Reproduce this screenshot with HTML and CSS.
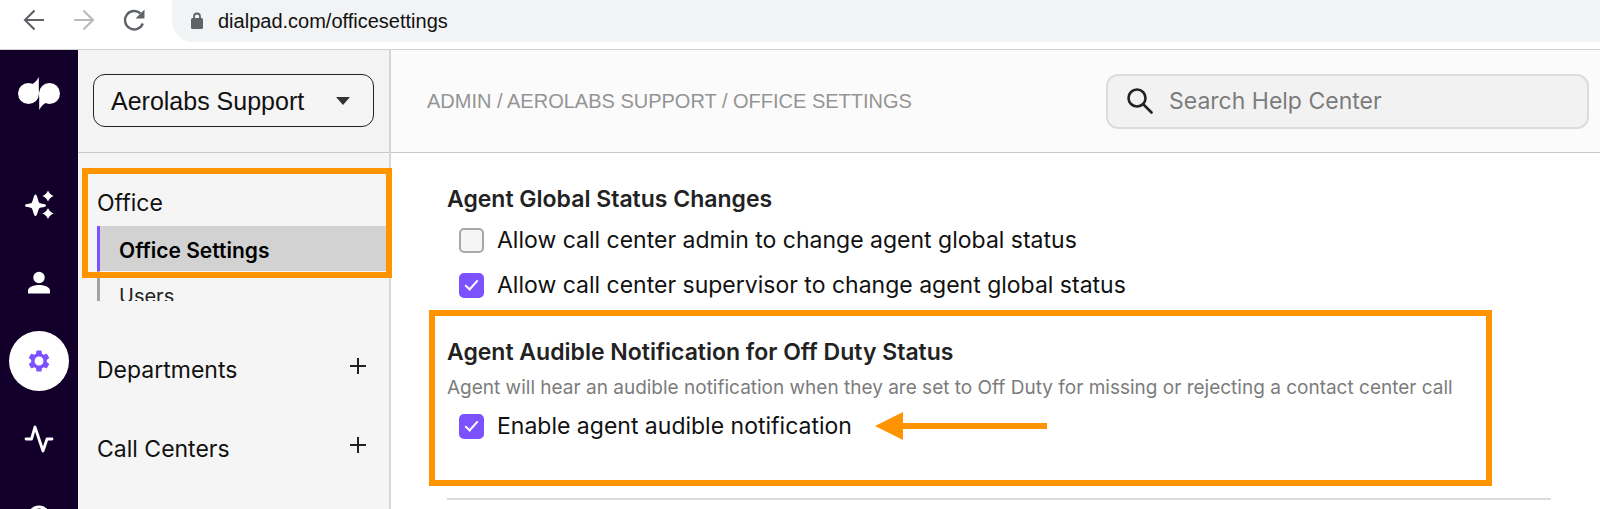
FILE: index.html
```html
<!DOCTYPE html>
<html lang="en">
<head>
    <meta charset="UTF-8">
    <meta name="viewport" content="width=device-width, initial-scale=1.0">
    <title>Office Settings</title>
    <link rel="stylesheet" href="styles.css">
</head>
<body>
    <!-- Browser bar -->
    <div class="browser-bar">
        <button class="nav-button" type="button" aria-label="Back">
            <svg width="24" height="24" viewBox="0 0 24 24" fill="none" stroke="#5f6368" stroke-width="2.200"><path d="M22 12H3M12.500 2.500L3 12l9.500 9.500"/></svg>
        </button>
        <button class="nav-button" type="button" aria-label="Forward">
            <svg width="24" height="24" viewBox="0 0 24 24" fill="none" stroke="#bababa" stroke-width="2.200"><path d="M2 12h19M11.500 2.500L21 12l-9.500 9.500"/></svg>
        </button>
        <button class="nav-button" type="button" aria-label="Reload">
            <svg width="24" height="24" viewBox="0 0 24 24"><path d="M20.800 15.500A9.200 9.200 0 1 1 18.500 5.500" fill="none" stroke="#5f6368" stroke-width="2.400"/><path d="M22.500 1.500v9h-9z" fill="#5f6368"/></svg>
        </button>
        <div class="address">
            <svg width="14" height="18" viewBox="0 0 14 18"><rect x="1" y="6" width="12" height="11" rx="1.500" fill="#5f6368"/><path d="M4 7V4.500a3 3 0 0 1 6 0V7" fill="none" stroke="#5f6368" stroke-width="1.800"/></svg>
            <input class="address-input" type="text" aria-label="Address" value="dialpad.com/officesettings">
        </div>
    </div>

    <div class="app">
        <!-- Icon rail -->
        <nav class="rail">
            <a class="rail-logo" href="#" aria-label="Home">
                <svg width="44" height="34" viewBox="0 0 44 34" fill="#fff"><circle cx="11.500" cy="16.500" r="10.500"/><circle cx="32.500" cy="16.500" r="10.500"/><path d="M21.800 0v17l-6-10.300C18.500 5.500 20 3 21.800 0zM22.200 33V16l6 10.300C25.500 27.500 24 30 22.200 33z"/></svg>
            </a>
            <a class="rail-item" href="#" aria-label="AI">
                <svg width="30" height="30" viewBox="0 0 30 30" fill="#fff"><path d="M11.500 4.500C13.500 4.500 14 12 15.500 13S22 13.500 22 15.500 17 17 15.500 18 13.500 26 11.500 26 9 19 7.500 18 1 17.500 1 15.500 6 14 7.500 13 9.500 4.500 11.500 4.500zM24 0.500C25.500 3.500 26.500 4.500 29.500 6 26.500 7.500 25.500 8.500 24 11.500 22.500 8.500 21.500 7.500 18.500 6 21.500 4.500 22.500 3.500 24 0.500zM24 18C25.500 21 26.500 22 29.500 23.500 26.500 25 25.500 26 24 29 22.500 26 21.500 25 18.500 23.500 21.500 22 22.500 21 24 18z"/></svg>
            </a>
            <a class="rail-item" href="#" aria-label="Contacts">
                <svg width="24" height="24" viewBox="0 0 24 24" fill="#fff"><circle cx="12" cy="6.500" r="5.700"/><path d="M1 22.500v-3c0-4 7-5.500 11-5.500s11 1.500 11 5.500v3z"/></svg>
            </a>
            <a class="rail-item rail-item-active" href="#" aria-label="Settings">
                <svg width="26" height="26" viewBox="0 0 24 24" fill="#7c52ff"><path d="M19.140 12.940c.04-.3.060-.61.060-.94s-.02-.64-.07-.94l2.030-1.580a.49.49 0 0 0 .12-.61l-1.920-3.320a.49.49 0 0 0-.59-.22l-2.390.96a7 7 0 0 0-1.620-.94l-.36-2.540a.48.48 0 0 0-.48-.41h-3.840a.48.48 0 0 0-.47.41l-.36 2.540a7.300 7.300 0 0 0-1.620.94l-2.390-.96a.48.48 0 0 0-.59.22L2.740 8.870a.48.48 0 0 0 .12.610l2.030 1.580c-.05.3-.09.63-.09.94s.02.64.07.94l-2.030 1.580a.49.49 0 0 0-.12.610l1.920 3.320c.12.22.37.29.59.22l2.390-.96c.5.38 1.030.7 1.620.94l.36 2.540c.05.24.24.41.48.41h3.840c.24 0 .44-.17.470-.41l.36-2.540a7 7 0 0 0 1.620-.94l2.390.96c.22.080.47 0 .59-.22l1.920-3.320a.47.47 0 0 0-.12-.61zM12 16.100a4.100 4.100 0 1 1 0-8.200 4.100 4.100 0 0 1 0 8.200z"/></svg>
            </a>
            <a class="rail-item" href="#" aria-label="Analytics">
                <svg width="30" height="30" viewBox="0 0 30 30" fill="none" stroke="#fff" stroke-width="2.800" stroke-linejoin="round" stroke-linecap="round"><path d="M2 15h5.500L11 3l8 24 4-12h5"/></svg>
            </a>
            <a class="rail-item" href="#" aria-label="Help">
                <svg width="24" height="24" viewBox="0 0 24 24" fill="none" stroke="#fff" stroke-width="3"><circle cx="12" cy="12" r="10"/></svg>
            </a>
        </nav>

        <!-- Sidebar -->
        <aside class="sidebar">
            <div class="sidebar-top">
                <div class="office-picker">
                    <select class="office-select" aria-label="Office">
                        <option>Aerolabs Support</option>
                    </select>
                    <svg class="office-caret" width="14" height="8" viewBox="0 0 14 8"><path d="M0 0h14L7 8z" fill="#333"/></svg>
                </div>
            </div>
            <div class="group group-current">
                <h2 class="group-title">Office</h2>
                <ul class="submenu">
                    <li><a class="submenu-link submenu-link-active" href="#">Office Settings</a></li>
                    <li><a class="submenu-link" href="#">Users</a></li>
                </ul>
            </div>
            <div class="group group-row">
                <h2 class="group-title">Departments</h2>
                <button class="add-button" type="button" aria-label="Add department">
                    <svg width="18" height="18" viewBox="0 0 18 18" stroke="#222" stroke-width="2"><path d="M9 1v16M1 9h16"/></svg>
                </button>
            </div>
            <div class="group group-row">
                <h2 class="group-title">Call Centers</h2>
                <button class="add-button" type="button" aria-label="Add call center">
                    <svg width="18" height="18" viewBox="0 0 18 18" stroke="#222" stroke-width="2"><path d="M9 1v16M1 9h16"/></svg>
                </button>
            </div>
        </aside>

        <!-- Content -->
        <main class="main">
            <header class="topbar">
                <div class="breadcrumb">ADMIN / AEROLABS SUPPORT / OFFICE SETTINGS</div>
                <div class="search">
                    <svg width="26" height="26" viewBox="0 0 26 26" fill="none" stroke="#222" stroke-width="2.600" stroke-linecap="round"><circle cx="10" cy="10" r="8.500"/><path d="M16.500 16.500l8 8"/></svg>
                    <input class="search-input" type="text" aria-label="Search Help Center" placeholder="Search Help Center">
                </div>
            </header>

            <form class="settings" action="#">
                <section class="setting">
                    <h3 class="setting-title">Agent Global Status Changes</h3>
                    <div class="check-list">
                        <div class="check-row">
                            <input class="check" type="checkbox" id="adminStatus">
                            <label for="adminStatus">Allow call center admin to change agent global status</label>
                        </div>
                        <div class="check-row">
                            <input class="check" type="checkbox" id="supervisorStatus" checked>
                            <label for="supervisorStatus">Allow call center supervisor to change agent global status</label>
                        </div>
                    </div>
                </section>
                <section class="setting setting-marked">
                    <h3 class="setting-title">Agent Audible Notification for Off Duty Status</h3>
                    <p class="setting-note">Agent will hear an audible notification when they are set to Off Duty for missing or rejecting a contact center call</p>
                    <div class="check-row">
                        <input class="check" type="checkbox" id="audible" checked>
                        <label for="audible">Enable agent audible notification</label>
                        <svg class="arrow" width="172" height="28" viewBox="0 0 172 28" fill="#ff9400"><path d="M0 14L28 0v11h144v6H28v11z"/></svg>
                    </div>
                </section>
                <hr class="divider">
            </form>
        </main>
    </div>
</body>
</html>
```
FILE: styles.css
```css
* {
    box-sizing: border-box;
}
body {
    margin: 0;
    height: 100vh;
    overflow: hidden;
    display: flex;
    flex-direction: column;
    font-family: Inter, "Liberation Sans", sans-serif;
    font-size: 23px;
    line-height: 28px;
    color: #111;
    background-color: #fff;
}
h2, h3, p, ul {
    margin: 0;
    padding: 0;
}
button {
    display: flex;
    padding: 0;
    border: none;
    background: none;
    cursor: pointer;
}
input, select {
    font: inherit;
    color: inherit;
}

/* browser bar */
.browser-bar {
    display: flex;
    gap: 26px;
    padding-left: 22px;
    height: 50px;
    flex-shrink: 0;
    border-bottom: 1px solid #d0d0d0;
}
.nav-button {
    padding-top: 8px;
}
.address {
    flex: 1;
    display: flex;
    align-items: center;
    gap: 14px;
    height: 42px;
    padding-left: 18px;
    border-radius: 0 0 0 21px;
    background-color: #f1f3f4;
}
.address-input {
    flex: 1;
    padding: 0;
    border: none;
    background: none;
    font-family: "Liberation Sans", Arial, sans-serif;
    font-size: 20px;
}

.app {
    flex: 1;
    min-height: 0;
    display: flex;
}

/* icon rail */
.rail {
    width: 78px;
    flex-shrink: 0;
    display: flex;
    flex-direction: column;
    align-items: center;
    gap: 18px;
    padding-top: 27px;
    overflow: hidden;
    background-color: #12002b;
}
.rail-logo {
    display: flex;
    margin-bottom: 46px;
}
.rail-item {
    width: 60px;
    height: 60px;
    flex-shrink: 0;
    display: flex;
    align-items: center;
    justify-content: center;
    border-radius: 50%;
}
.rail-item-active {
    background-color: #fff;
}

/* sidebar */
.sidebar {
    width: 313px;
    flex-shrink: 0;
    border-right: 2px solid #d6d6d6;
    background-color: #f5f5f5;
}
.sidebar-top {
    height: 103px;
    padding: 24px 15px;
    border-bottom: 1px solid #c8c8c8;
    background-color: #f3f3f3;
}
.office-picker {
    position: relative;
}
.office-select {
    width: 100%;
    height: 53px;
    padding: 0 17px;
    appearance: none;
    border: 1px solid #222;
    border-radius: 12px;
    background-color: #f5f5f5;
    font-family: "Liberation Sans", Arial, sans-serif;
    font-size: 25px;
}
.office-caret {
    position: absolute;
    right: 24px;
    top: 23px;
}
.group {
    padding-left: 19px;
}
.group-title {
    font-size: 23px;
    font-weight: 400;
}
.group-current {
    position: relative;
    padding-top: 36px;
    margin-bottom: 55px;
}
.group-current::after {
    content: "";
    position: absolute;
    top: 15px;
    left: 4px;
    right: -3px;
    height: 98px;
    border: 6px solid #ff9400;
}
.submenu {
    height: 75px;
    margin-top: 9px;
    overflow: hidden;
    list-style: none;
}
.submenu-link {
    display: block;
    padding: 11px 19px 6px;
    border-left: 3px solid #a3a3a3;
    font-size: 20px;
    color: #222;
    text-decoration: none;
}
.submenu-link-active {
    border-color: #7c52ff;
    background-color: #d2d2d2;
    font-size: 21px;
    font-weight: 600;
    color: #000;
}
.group-row {
    display: flex;
    justify-content: space-between;
    padding-right: 22px;
    margin-bottom: 51px;
}
.add-button {
    align-items: center;
    height: 20px;
}

/* content */
.main {
    flex: 1;
    min-width: 0;
}
.topbar {
    display: flex;
    align-items: center;
    justify-content: space-between;
    height: 103px;
    padding: 0 11px 0 36px;
    border-bottom: 1px solid #c8c8c8;
    background-color: #fbfbfb;
}
.breadcrumb {
    font-family: "Liberation Sans", Arial, sans-serif;
    font-size: 20px;
    color: #949494;
}
.search {
    display: flex;
    align-items: center;
    gap: 16px;
    width: 42%;
    max-width: 483px;
    height: 55px;
    padding: 0 19px;
    border: 2px solid #dcdcdc;
    border-radius: 12px;
    background-color: #f2f2f2;
}
.search-input {
    flex: 1;
    min-width: 0;
    padding: 0;
    border: none;
    background: none;
}
.search-input::placeholder {
    color: #7c7c7c;
}
.settings {
    padding: 32px 49px 0 38px;
}
.setting {
    padding-left: 18px;
}
.setting-title {
    font-size: 23px;
    font-weight: 600;
    color: #222;
}
.check-list {
    display: grid;
    gap: 17px;
    margin-top: 13px;
}
.check-row {
    display: flex;
    align-items: center;
    gap: 13px;
    padding: 0 12px;
}
.check {
    width: 25px;
    height: 25px;
    margin: 0;
    flex-shrink: 0;
    display: grid;
    place-items: center;
    appearance: none;
    border: 2px solid #a8a8a8;
    border-radius: 5px;
    background-color: #f5f5f5;
}
.check:checked {
    border-color: #7c52ff;
    background-color: #7c52ff;
}
.check:checked::after {
    content: "";
    width: 5px;
    height: 11px;
    margin-bottom: 3px;
    border: solid #fff;
    border-width: 0 2px 2px 0;
    transform: rotate(42deg);
}
.setting-marked {
    margin: 11px 59px 0 0;
    padding: 22px 12px 40px;
    border: 6px solid #ff9400;
}
.setting-note {
    margin: 8px 0 10px;
    font-size: 19px;
    color: #7c7c7c;
}
.arrow {
    margin-left: 10px;
}
.divider {
    margin: 12px 0 0 18px;
    border: none;
    border-top: 2px solid #dcdcdc;
}
```
